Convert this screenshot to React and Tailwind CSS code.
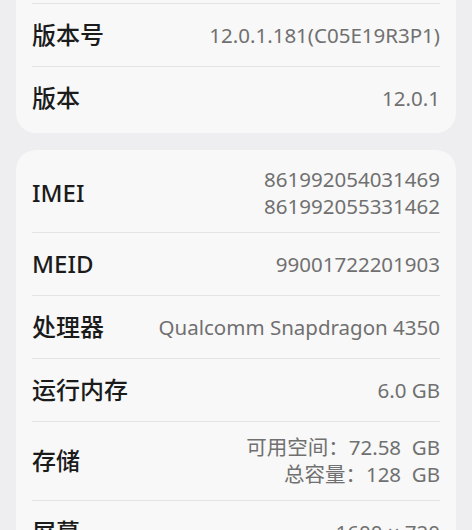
import React from "react";

const font = { fontFamily: '"Noto Sans", "Noto Sans CJK SC", sans-serif' };

function Row({ label, values, tall }) {
  return (
    <div className={`flex items-center justify-between ${tall ? "h-[78px]" : "h-[62px]"}`}>
      <div className="text-[24px] font-medium text-[#1b1b1b] leading-none">{label}</div>
      <div className="flex flex-col items-end text-[20.5px] leading-[27px] text-[#707070] whitespace-pre">
        {values.map((v, i) => (
          <div key={i}>{v}</div>
        ))}
      </div>
    </div>
  );
}

function Sep() {
  return <div className="h-px bg-[#e4e4e6]" />;
}

function Card({ rows, className = "" }) {
  return (
    <div className={`mx-4 rounded-[20px] bg-[#f8f8f8] px-4 py-1 ${className}`}>
      {rows.map((r, i) => (
        <React.Fragment key={i}>
          {i > 0 && <Sep />}
          <Row {...r} />
        </React.Fragment>
      ))}
    </div>
  );
}

export default function App() {
  return (
    <div className="h-[530px] w-[472px] overflow-hidden bg-[#eeedf0]" style={font}>
      <Card
        className="mt-[-63px]"
        rows={[
          { label: "", values: [] },
          { label: "版本号", values: ["12.0.1.181(C05E19R3P1)"] },
          { label: "版本", values: ["12.0.1"] },
        ]}
      />
      <Card
        className="mt-[17px]"
        rows={[
          { label: "IMEI", values: ["861992054031469", "861992055331462"], tall: true },
          { label: "MEID", values: ["99001722201903"] },
          { label: "处理器", values: ["Qualcomm Snapdragon 4350"] },
          { label: "运行内存", values: ["6.0 GB"] },
          { label: "存储", values: ["可用空间：72.58  GB", "总容量：128  GB"], tall: true },
          { label: "屏幕", values: ["1600 × 720"] },
        ]}
      />
    </div>
  );
}
